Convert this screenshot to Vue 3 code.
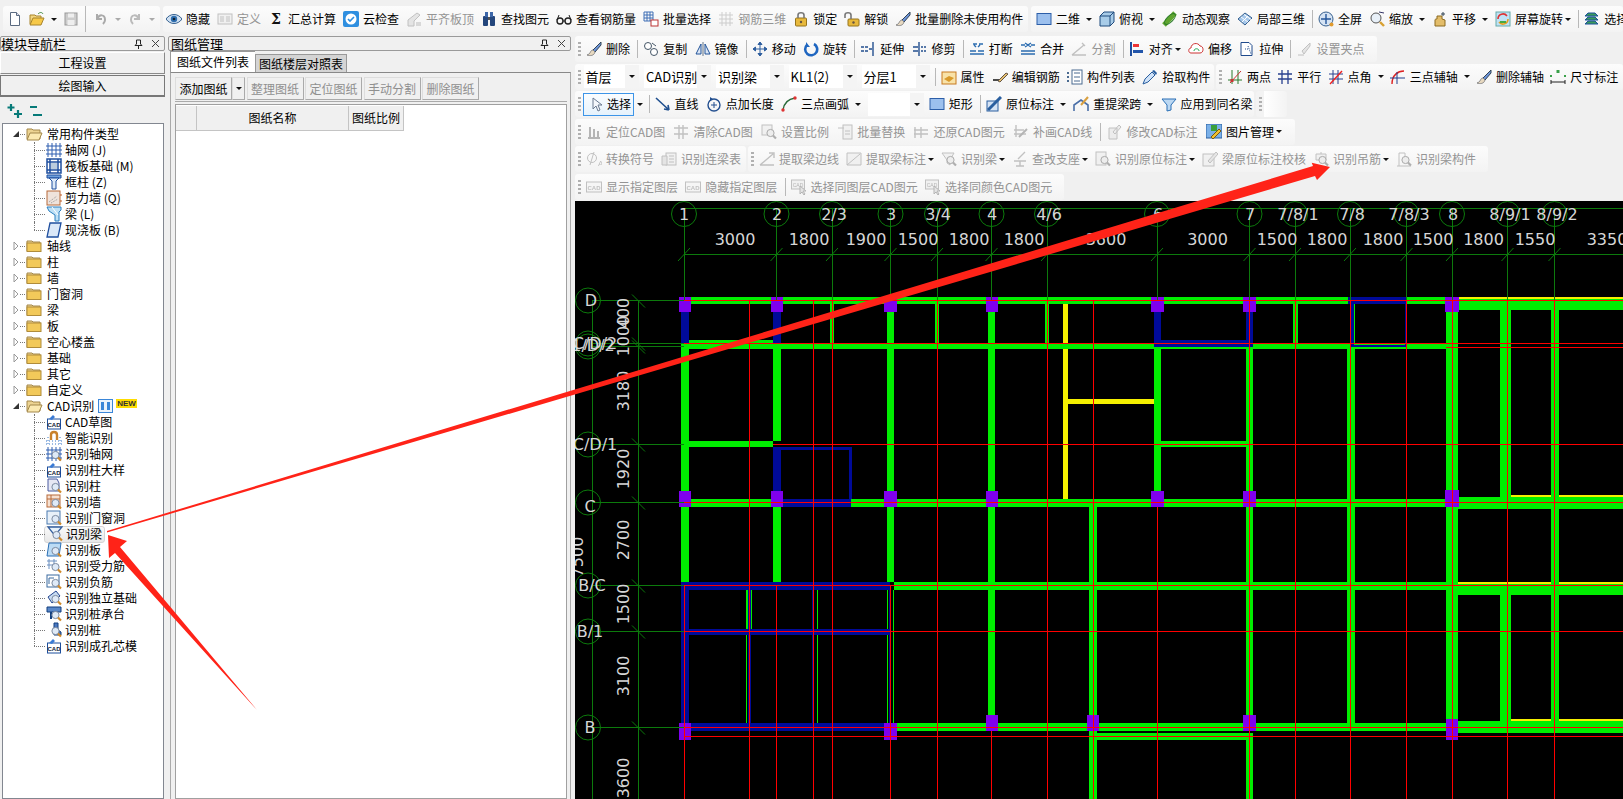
<script setup>
const mag = '<circle cx="9.5" cy="9" r="3.6" fill="#dfeaf7" stroke="#7c8aa0"/><path d="M12 11.5l3 3" stroke="#d08a2a" stroke-width="2.2"/>'
const cad = '<rect x="1.5" y="5" width="13" height="10" fill="#fff" stroke="#1d4f9c"/><text x="8" y="13" font-size="6" font-weight="700" text-anchor="middle" fill="#123" font-family="Liberation Sans">CAD</text><path d="M3 5l4-4 2 2-3 3z" fill="#3a7bd5"/>'
const gridI = '<path d="M2 1v14M6 1v14M10 1v14M14 1v14M0 4h16M0 8h16M0 12h16" stroke="#2f5fb0" fill="none"/>'
const brush = '<path d="M15 1L7 9l2 2 6-7z" fill="#6c93d8" stroke="#345"/><path d="M7 9c-3 0-2 4-6 5 3 1 7 1 8-3z" fill="#e8d9c0" stroke="#888"/>'
const icons = {
  new: '<path d="M3.5 1.5h6l3 3v10h-9z" fill="#fff" stroke="#5a6a80"/><path d="M9.5 1.5v3h3" fill="#dde" stroke="#5a6a80"/>',
  open: '<path d="M1 13V4h5l1 1h5v2" fill="#f2d680" stroke="#a8842c"/><path d="M1 14l3-7h11l-3 7z" fill="#f7c948" stroke="#a8842c"/><path d="M9 3c2-2 4-2 5 0" stroke="#3f8a3f" fill="none"/>',
  save: '<rect x="2" y="2" width="12" height="12" fill="#ccc" stroke="#999"/><rect x="5" y="2.5" width="6" height="4" fill="#eee"/><rect x="4.5" y="9" width="7" height="5" fill="#eee"/>',
  undo: '<path d="M4 3v5h5M4.5 8C6 3 12 3 12 9c0 2-1 3-2 4" fill="none" stroke="#aaa" stroke-width="2"/>',
  redo: '<path d="M12 3v5H7M11.5 8C10 3 4 3 4 9c0 2 1 3 2 4" fill="none" stroke="#bbb" stroke-width="2"/>',
  eye: '<path d="M0 8c4-6 12-6 16 0-4 6-12 6-16 0z" fill="#cfe0f2" stroke="#35608f"/><circle cx="8" cy="8" r="3.2" fill="#2f6fb0"/><circle cx="8" cy="8" r="1.3" fill="#123"/>',
  define: '<rect x="1" y="3" width="14" height="10" fill="#eee" stroke="#aaa"/><path d="M3 6h4M3 8h4M3 10h4M9 6h4M9 8h4M9 10h4" stroke="#aaa"/>',
  sigma: '<text x="8" y="13" font-size="14" font-weight="700" text-anchor="middle" fill="#111" font-family="DejaVu Serif">Σ</text>',
  check: '<rect x="0" y="0" width="16" height="16" rx="2" fill="#2f8fe0"/><circle cx="8" cy="8" r="5.5" fill="#fff"/><path d="M5 8l2 2 4-4" fill="none" stroke="#2f8fe0" stroke-width="1.6"/>',
  level: '<path d="M2 15V9l9-7 3 2-6 6v5z" fill="#ddd" stroke="#aaa"/><path d="M10 15v-4h5v4z" fill="#ccc"/>',
  binoc: '<rect x="2" y="5" width="5" height="10" rx="1" fill="#24467c"/><rect x="9" y="5" width="5" height="10" rx="1" fill="#24467c"/><rect x="4" y="1" width="3" height="5" fill="#3c66a8"/><rect x="9" y="1" width="3" height="5" fill="#3c66a8"/><rect x="7" y="6" width="2" height="3" fill="#555"/>',
  glass: '<circle cx="4" cy="10" r="3" fill="none" stroke="#222" stroke-width="1.4"/><circle cx="12" cy="10" r="3" fill="none" stroke="#222" stroke-width="1.4"/><path d="M7 10h2M1 9l2-5M15 9l-2-5" stroke="#222"/>',
  batch: '<path d="M1 1h9v9H1zM1 4h9M1 7h9M4 1v9M7 1v9" fill="none" stroke="#3f6fb5"/><rect x="8" y="9" width="7" height="6" fill="#fff" stroke="#b33"/>',
  rebar: '<path d="M1 4h14M1 8h14M1 12h14M4 1v14M8 1v14M12 1v14" stroke="#bbb" fill="none"/>',
  lock: '<rect x="2.5" y="7" width="11" height="8" rx="1" fill="#e8b93c" stroke="#96741c"/><path d="M5 7V4c0-3 6-3 6 0v3" fill="none" stroke="#777" stroke-width="1.6"/><circle cx="8" cy="11" r="1.2" fill="#654"/>',
  unlock: '<rect x="4" y="8" width="11" height="7" rx="1" fill="#e8b93c" stroke="#96741c"/><path d="M1 7V4c0-3 6-3 6 0v4" fill="none" stroke="#777" stroke-width="1.6"/><circle cx="9.5" cy="11.5" r="1.2" fill="#654"/>',
  brush,
  rect2d: '<rect x="1" y="2.5" width="14" height="11" fill="#9cc0ee" stroke="#2c5ea8"/>',
  cube: '<path d="M1 5l4-4h10v10l-4 4H1z" fill="#a8cce8" stroke="#1f4a7c"/><path d="M1 5h10v10M11 5l4-4" fill="none" stroke="#1f4a7c"/>',
  orbit: '<path d="M2 14L13 2" stroke="#5fa52f" stroke-width="5"/><ellipse cx="8" cy="8" rx="7" ry="3" fill="none" stroke="#2a7a2a" transform="rotate(-45 8 8)"/>',
  local3d: '<path d="M1 8l7-6 7 5-7 7z" fill="#a5c7ea" stroke="#35608f"/><path d="M4 6l7 5M7 3.5l7 5M5 11l6-6" stroke="#fff"/>',
  full: '<circle cx="8" cy="8" r="7" fill="#d5e3f3" stroke="#37608f"/><path d="M8 3v10M3 8h10" stroke="#23559a" stroke-width="1.4"/><circle cx="13.5" cy="13.5" r="2" fill="#e09a2d"/>',
  zoom: '<circle cx="7" cy="7" r="5" fill="#e8f0f8" stroke="#555"/><path d="M11 11l4 4" stroke="#d8a030" stroke-width="2.4"/><path d="M10 1l5 1" stroke="#336"/>',
  hand: '<path d="M3 15V9c0-1 1-1 2-1V5h5v3l3 1v6z" fill="#e3bd6a" stroke="#8c6a20"/><path d="M11 1v4M9 3h4" stroke="#345"/>',
  screen: '<rect x="1" y="1" width="14" height="14" fill="#bfe2f5" stroke="#6aa"/><path d="M3 8a5 5 0 0 1 9-3" fill="none" stroke="#d33" stroke-width="1.6"/><path d="M13 8a5 5 0 0 1-9 3" fill="none" stroke="#e3a020" stroke-width="1.6"/><rect x="5" y="10" width="6" height="2" fill="#4a4"/>',
  layer: '<path d="M1 5h13l-3-3H4zM1 9h13l-3-3H4zM1 13h13l-3-3H4z" fill="#3a9a5a" stroke="#1b4f9c"/>',
  copy: '<circle cx="5" cy="5" r="3.5" fill="#fff" stroke="#456"/><circle cx="11" cy="11" r="3.5" fill="#fff" stroke="#456"/><path d="M9 2l4 3" stroke="#456"/>',
  mirror: '<path d="M8 1v14" stroke="#678"/><path d="M6 3v10H1z" fill="#dbe6f5" stroke="#23559a"/><path d="M10 3v10h5z" fill="#dbe6f5" stroke="#23559a"/>',
  move: '<path d="M8 1v14M1 8h14M8 1L6 3.5h4zM8 15l-2-2.500h4zM1 8l2.500-2v4zM15 8l-2.500-2v4z" fill="#2f5f9f" stroke="#2f5f9f"/>',
  rotate: '<path d="M11 3a6 6 0 1 1-7 1" fill="none" stroke="#1f66c0" stroke-width="2.6"/><path d="M3 1v5h4z" fill="#1f66c0"/>',
  extend: '<path d="M13 1v14M1 6h3M5 6h3M1 10h3M5 10h3M9 8h3" stroke="#234f8f" fill="none" stroke-width="1.4"/>',
  trim: '<path d="M7 1v14M1 6h5M1 10h5M9 6h2M12 6h2M9 10h2M12 10h2" stroke="#234f8f" fill="none" stroke-width="1.4"/>',
  break: '<path d="M1 13h14M1 10h6M9 10h6M4 3h4M10 3h4M7 6l-2-2M9 6l2-2" stroke="#2b6cb0" fill="none" stroke-width="1.4"/>',
  merge: '<path d="M1 13h14M1 10h14M1 4h4M11 4h4M5 2l3 2-3 2M11 2L8 4l3 2" stroke="#2b6cb0" fill="none" stroke-width="1.4"/>',
  split: '<path d="M1 14h14M1 14l12-10M11 2l3 3" stroke="#aaa" fill="none" stroke-width="1.4"/>',
  align: '<path d="M2 1v14" stroke="#1f4f9f" stroke-width="2"/><rect x="4" y="3" width="6" height="3" fill="#e33"/><rect x="4" y="9" width="10" height="3" fill="#2255aa"/>',
  cloud: '<path d="M3 12c-3 0-3-5 0-5 0-5 7-6 9-2 4 0 4 7 0 7z" fill="#fff" stroke="#c33"/><path d="M6 10c0-3 5-3 5 0" fill="none" stroke="#2a5"/>',
  stretch: '<path d="M2 1.500h8l3 3v10H2z" fill="#fff" stroke="#1f4a8c"/><path d="M9 5l3 8M6 8h4" stroke="#1f4a8c" stroke-dasharray="1 1"/>',
  grips: '<path d="M2 14h6M14 2L6 10l2 3 6-8z" fill="#ddd" stroke="#aaa"/>',
  prop: '<rect x="1" y="3" width="14" height="12" fill="#f8e2a8" stroke="#c77a20"/><path d="M3 10l5-3 5 2-5 4z" fill="#d99a2b"/>',
  pen: '<path d="M1 11h9" stroke="#111" stroke-width="1.4"/><path d="M6 12l8-8 2 1-8 8z" fill="#e5c070" stroke="#654"/>',
  list: '<rect x="5" y="1" width="10" height="14" fill="#fff" stroke="#4a6a90"/><path d="M7 4h6M7 8h6M7 12h6" stroke="#4a6a90"/><path d="M1 3v2M1 7v2M1 11v2" stroke="#4a6a90" stroke-width="2"/>',
  drop: '<path d="M1 15l2-5 7-7 3 3-7 7z" fill="#cfe2f8" stroke="#2a5f9f"/><path d="M10 2l2-1 3 3-1 2z" fill="#2a5f9f"/>',
  twop: '<path d="M1 11h14M5 1v14M11 1v14" stroke="#2a7a2a"/><path d="M3 14L14 2" stroke="#c33"/><rect x="3.500" y="10" width="3" height="3" fill="#c33"/>',
  para: '<path d="M1 5h14M1 10h14M5 1v14M11 1v14" stroke="#28408f" stroke-width="1.300"/>',
  angle: '<path d="M1 5h14M1 10h14M5 1v14M10 1v14" stroke="#28408f"/><path d="M2 15L14 2" stroke="#e22" stroke-width="1.400"/>',
  arcax: '<path d="M2 15C2 6 8 2 14 2" fill="none" stroke="#d22" stroke-width="1.400"/><path d="M0 9h15M7 3v12" stroke="#22408f"/>',
  dim: '<path d="M1 11v4M15 11v4M1 13h14" stroke="#222"/><rect x="6.500" y="1" width="3" height="3" fill="#3aa04a"/><rect x="0" y="6" width="2" height="2" fill="#3aa04a"/><rect x="14" y="6" width="2" height="2" fill="#3aa04a"/>',
  cursor: '<path d="M4 2v11l3-3 2 5 2-1-2-5h4z" fill="#f4f7fb" stroke="#6a7a90"/>',
  line: '<path d="M1 2l13 12M14 14l-1-5M14 14l-5-1" fill="none" stroke="#1f4f8f" stroke-width="1.600"/>',
  plen: '<circle cx="8" cy="9" r="6" fill="none" stroke="#234f8f" stroke-width="1.400"/><path d="M8 6v6M5 9h6" stroke="#234f8f"/><path d="M4 1l3 2-3 2z" fill="#234f8f"/>',
  arc: '<path d="M2 14C3 7 7 3 14 2" fill="none" stroke="#2a6a3a" stroke-width="1.400"/><circle cx="2" cy="14" r="1.700" fill="#d33"/><circle cx="14" cy="2" r="1.700" fill="#d33"/>',
  mark: '<rect x="1" y="5" width="11" height="10" fill="#d5e3f5" stroke="#2a5f9f"/><path d="M2 14L15 1" stroke="#2a5f9f" stroke-width="3"/>',
  respan: '<path d="M1 15V9l7-5 7 5v6" fill="none" stroke="#4a6fa8" stroke-width="1.600"/><path d="M8 9l7-8" stroke="#d9a040" stroke-width="2"/>',
  applyI: '<path d="M1 3h14l-5 6v5l-4 1V9z" fill="#bcd8f2" stroke="#2a6fb5"/>',
  locate: '<path d="M2 14h12M4 13V3M8 13V5M12 13V7" stroke="#999" stroke-width="2"/>',
  clear: '<path d="M1 4h14M1 10h14M6 1v14M10 1v14" stroke="#aaa" stroke-width="1.400"/>',
  scale: '<rect x="1" y="1" width="10" height="10" fill="#eee" stroke="#aaa"/>' + mag,
  swap: '<rect x="6" y="1" width="9" height="14" fill="#eee" stroke="#aaa"/><path d="M1 4h6M8 7h5M8 10h5" stroke="#aaa"/>',
  revert: '<path d="M2 3v11M8 3v11M1 6h14M1 10h14" stroke="#aaa" stroke-width="1.400"/>',
  fill: '<path d="M3 1v12M1 6h10M1 10h12" stroke="#aaa" stroke-width="1.400"/><path d="M6 13l8-8" stroke="#999" stroke-width="2"/>',
  edit: '<path d="M3 4h8v11H3zM7 8l6-7 2 2-6 7z" fill="#e8e8e8" stroke="#aaa"/>',
  pic: '<rect x="0" y="0" width="16" height="14" fill="#7ab0e8" stroke="#2a5f9f"/><rect x="5" y="1" width="6" height="6" fill="#3aa03a"/><path d="M7 15l8-8-2-2-8 8z" fill="#f0c030" stroke="#7a5a10"/>',
  sym: '<circle cx="6" cy="7" r="4.500" fill="none" stroke="#aaa"/><path d="M4 14L8 1" stroke="#aaa"/><text x="12" y="15" font-size="8" fill="#aaa" font-family="Liberation Sans">A</text>',
  table: '<rect x="5" y="2" width="10" height="12" fill="#eee" stroke="#aaa"/><path d="M1 5h5v9H1z" fill="#ddd" stroke="#aaa"/><path d="M8 5h5M8 8h5M8 11h5" stroke="#aaa"/>',
  edge: '<path d="M1 14h14M1 14L14 3M10 2h5v5" fill="none" stroke="#aaa" stroke-width="1.400"/>',
  tag: '<path d="M1 2h14v12H1zM1 14L14 3" fill="#eee" stroke="#aaa"/>',
  beamf: '<path d="M1 2h12l-4 7v5l-3-2V9z" fill="#eee" stroke="#aaa"/>' + mag,
  seat: '<path d="M2 10h12M8 10v5M4 15h8M6 8l7-7" stroke="#aaa" stroke-width="1.400"/>',
  orig: '<rect x="1" y="1" width="10" height="13" fill="#eee" stroke="#aaa"/>' + mag,
  verify: '<rect x="1" y="3" width="11" height="12" fill="#eee" stroke="#aaa"/><path d="M6 10l8-9 2 2-8 9z" fill="#ddd" stroke="#aaa"/>',
  hang: '<path d="M3 3h10v6H3z" fill="#eee" stroke="#aaa"/><path d="M8 1v2" stroke="#aaa"/>' + mag,
  bcomp: '<path d="M1 15h14M3 15V2h6v6" fill="none" stroke="#aaa"/>' + mag,
  cadbox: '<rect x="0.500" y="3" width="15" height="10" fill="#f4f4f4" stroke="#aaa"/><text x="8" y="10.500" font-size="6" font-weight="700" text-anchor="middle" fill="#aaa" font-family="Liberation Sans">CAD</text>',
  cadsel: '<rect x="0.500" y="1" width="13" height="9" fill="#eee" stroke="#aaa"/><text x="7" y="8" font-size="5" text-anchor="middle" fill="#999" font-family="Liberation Sans">CAD</text><path d="M9 7v8l2-2 2 3 1-1-2-3h3z" fill="#ddd" stroke="#999"/>',
  // tree icons
  grid: gridI,
  raft: '<rect x="1" y="1" width="14" height="14" fill="#fff" stroke="#1f4f9f" stroke-width="1.500"/><path d="M4 1v14M12 1v14M1 4h14M1 12h14" stroke="#1f4f9f" stroke-width="1.500"/><rect x="5" y="5" width="6" height="6" fill="#bcd"/>',
  col: '<path d="M1 1h14v3H1z" fill="#6fa0dc" stroke="#1f4f9f"/><path d="M3 4h10l-3 3v8H6V7z" fill="#dbe8f7" stroke="#1f4f9f"/>',
  wall: '<rect x="1" y="1" width="13" height="14" fill="#efe3dc" stroke="#b86a3a"/><path d="M3 12l8-6M5 13l7-4" stroke="#999" stroke-dasharray="1 1"/><path d="M14 5h2M14 11h2" stroke="#c05a20"/>',
  beam: '<path d="M1 1h14v3l-2 2v9h-4V9L3 5z" fill="#bfe0f5" stroke="#2a7fc0"/><path d="M6 1l6 8" stroke="#fff"/>',
  slab: '<path d="M4 1h11l-3 14H1z" fill="#dbe8f8" stroke="#1f4f9f" stroke-width="1.300"/>',
  cad,
  magnet: '<path d="M5 10V5c0-4 6-4 6 0v5" fill="none" stroke="#c9812a" stroke-width="2.400"/><path d="M0 11h16M0 14h16M2 7v9M14 7v9" stroke="#3a78c8" stroke-dasharray="1 2"/>',
  fgrid: gridI + mag,
  fwall: '<rect x="1" y="1" width="13" height="12" fill="#f6e0d0" stroke="#b86a3a"/><path d="M1 5h13M5 1v12" stroke="#b86a3a"/>' + mag,
  fcol: '<path d="M2 1h9l2 4v8H2z" fill="#e6e8f4" stroke="#4a5aa0"/>' + mag,
  fdoor: '<rect x="1" y="1" width="13" height="13" fill="#e8f0f8" stroke="#4a7ab0"/>' + mag,
  fbeam: '<path d="M1 1h14L9 8v3z" fill="#e8f2fa" stroke="#345f9f" stroke-width="1.300"/>' + mag,
  fslab: '<path d="M3 1h12l-2 13H1z" fill="#bcdcf5" stroke="#2a6fb5"/>' + mag,
  frebar: '<path d="M1 3h10M1 7h10M3 1v10M8 1v10" stroke="#6a8fc0"/>' + mag,
  fneg: '<rect x="1" y="1" width="12" height="12" fill="#fff" stroke="#3a6a9f"/><path d="M3 10V4h5" fill="none" stroke="#3a6a9f"/>' + mag,
  ffound: '<path d="M2 7l8-6 4 5-8 7z" fill="#c8dcf2" stroke="#23458f"/>' + mag,
  fcap: '<path d="M1 1h14v5H1z" fill="#5a88c8" stroke="#123f7f"/><path d="M5 6v7" stroke="#123f7f" stroke-width="2"/>' + mag,
  fpile: '<path d="M8 1h4v7l3 2v3H8z" fill="#4a78c0" stroke="#123f7f"/>' + mag
}

const it = (i, t, a = 0, off = false) => ({ i, t, a, off })
const dis = (i, t, a = 0) => it(i, t, a, true)
const sep = { sep: true }

const topLeft = [
  { i: 'new', only: true },
  { i: 'open', only: true, a: 1 },
  { i: 'save', only: true },
  sep,
  { i: 'undo', only: true, a: 1 },
  { i: 'redo', only: true, a: 1 }
]
const topMid = [
  it('eye', '隐藏'), dis('define', '定义'), it('sigma', '汇总计算'), it('check', '云检查'),
  dis('level', '平齐板顶'), it('binoc', '查找图元'), it('glass', '查看钢筋量'), it('batch', '批量选择'),
  dis('rebar', '钢筋三维'), it('lock', '锁定'), it('unlock', '解锁'), it('brush', '批量删除未使用构件')
]
const topRight = [
  it('rect2d', '二维', 1), it('cube', '俯视', 1), it('orbit', '动态观察'), it('local3d', '局部三维'), sep,
  it('full', '全屏'), it('zoom', '缩放', 1), it('hand', '平移', 1), it('screen', '屏幕旋转', 2), sep,
  it('layer', '选择')
]

const rows = [
  [{ grip: true, items: [
    it('brush', '删除'), sep, it('copy', '复制'), it('mirror', '镜像'), sep, it('move', '移动'), it('rotate', '旋转'), sep,
    it('extend', '延伸'), it('trim', '修剪'), sep, it('break', '打断'), it('merge', '合并'), dis('split', '分割'), sep,
    it('align', '对齐', 2), it('cloud', '偏移'), it('stretch', '拉伸'), sep, dis('grips', '设置夹点')
  ] }],
  [{ grip: true, width: 639, items: [
    { combo: '首层', w: 55.5 }, { combo: 'CAD识别', w: 67 }, { combo: '识别梁', w: 67.5 }, { combo: 'KL1(2)', w: 68 }, { combo: '分层1', w: 68 },
    sep, it('prop', '属性'), it('pen', '编辑钢筋'), it('list', '构件列表'), it('drop', '拾取构件')
  ] }, { grip: true, fill: true, items: [
    it('twop', '两点'), it('para', '平行'), it('angle', '点角', 1), it('arcax', '三点辅轴', 1), it('brush', '删除辅轴'), it('dim', '尺寸标注')
  ] }],
  [{ grip: true, width: 679, items: [
    { sel: true }, sep, it('line', '直线'), it('plen', '点加长度'), it('arc', '三点画弧', 1), { combo: '', w: 55.5 },
    it('rect2d', '矩形'), sep, it('mark', '原位标注', 1), it('respan', '重提梁跨', 1), it('applyI', '应用到同名梁')
  ] }, { grip: true, width: 31, blank: true, items: [] }],
  [{ grip: true, items: [
    dis('locate', '定位CAD图'), dis('clear', '清除CAD图'), dis('scale', '设置比例'), dis('swap', '批量替换'),
    dis('revert', '还原CAD图元'), dis('fill', '补画CAD线'), sep, dis('edit', '修改CAD标注'), it('pic', '图片管理', 2)
  ] }],
  [{ grip: true, width: 171, items: [dis('sym', '转换符号'), dis('table', '识别连梁表')] },
   { grip: true, items: [
    dis('edge', '提取梁边线'), dis('tag', '提取梁标注', 2), dis('beamf', '识别梁', 2), dis('seat', '查改支座', 2),
    dis('orig', '识别原位标注', 2), dis('verify', '梁原位标注校核'), dis('hang', '识别吊筋', 2), dis('bcomp', '识别梁构件')
  ] }],
  [{ grip: true, items: [
    dis('cadbox', '显示指定图层'), dis('cadbox', '隐藏指定图层'), sep, dis('cadsel', '选择同图层CAD图元'), dis('cadsel', '选择同颜色CAD图元')
  ] }]
]

const tree = [
  { t: '常用构件类型', open: true },
  ...[['grid', '轴网 (J)'], ['raft', '筏板基础 (M)'], ['col', '框柱 (Z)'], ['wall', '剪力墙 (Q)'], ['beam', '梁 (L)'], ['slab', '现浇板 (B)']]
    .map(([i, t], n) => ({ i, t, child: true, last: n === 5 })),
  ...['轴线', '柱', '墙', '门窗洞', '梁', '板', '空心楼盖', '基础', '其它', '自定义'].map((t) => ({ t })),
  { t: 'CAD识别', open: true, badge: true },
  ...[['cad', 'CAD草图'], ['magnet', '智能识别'], ['fgrid', '识别轴网'], ['cad', '识别柱大样'], ['fcol', '识别柱'], ['fwall', '识别墙'],
    ['fdoor', '识别门窗洞'], ['fbeam', '识别梁'], ['fslab', '识别板'], ['frebar', '识别受力筋'], ['fneg', '识别负筋'], ['ffound', '识别独立基础'],
    ['fcap', '识别桩承台'], ['fpile', '识别桩'], ['cad', '识别成孔芯模']]
    .map(([i, t], n) => ({ i, t, child: true, last: n === 14, active: n === 7 }))
]

// drawing: everything below is in page pixels, the svg viewBox matches
const colX = [684, 776.5, 832, 890.5, 937, 991.5, 1047, 1157, 1249.5, 1295, 1350, 1406.5, 1452, 1507.5, 1554.5]
const topLabels = [
  ['1', 684, 684], ['2', 776.5, 777], ['2/3', 832, 834], ['3', 890.5, 891], ['3/4', 937, 938], ['4', 991.5, 992], ['4/6', 1047, 1049],
  ['6', 1157, 1158], ['7', 1249.5, 1250], ['7/8/1', 1295, 1298], ['7/8', 1350, 1352], ['7/8/3', 1406.5, 1409], ['8', 1452, 1453],
  ['8/9/1', 1507.5, 1510], ['8/9/2', 1554.5, 1557]
]
const dims = [
  ['3000', 735], ['1800', 809], ['1900', 866], ['1500', 918], ['1800', 969], ['1800', 1024], ['3600', 1106], ['3000', 1207.5],
  ['1500', 1277], ['1800', 1327], ['1800', 1383], ['1500', 1433], ['1800', 1483.5], ['1550', 1535], ['3350', 1607]
]
const rowY = [300.5, 343.5, 346.5, 444.5, 502.5, 585.5, 631.5, 727.5]
const rowLabels = [['D', 591, 306], ['C/D/2', 595, 349], ['1/D/2', 593, 351], ['C/D/1', 595, 450], ['C', 590, 512], ['B/C', 592, 591], ['B/1', 590, 637], ['B', 590, 733]]
const sideDims = [['400', 313], ['1000', 336], ['3180', 391], ['1920', 469], ['2700', 540], ['1500', 604], ['3100', 676], ['3600', 778]]

const green = [
  [681, 297, 1446, 304], [681, 304, 689, 585], [773, 343, 781, 441], [773, 507, 781, 582], [689, 340, 773, 344], [681, 343, 1446, 349],
  [830, 304, 834, 343], [887, 304, 894, 582], [934.5, 304, 939, 343], [988, 297, 995, 731], [1045, 304, 1049, 343],
  [689, 441, 773, 447], [1161, 441, 1246, 447], [681, 499, 1446, 507], [1154, 297, 1161, 499], [1246, 297, 1253, 731],
  [1293, 304, 1298, 343], [1347, 343, 1355, 731], [1446, 297, 1458, 731], [1458, 299, 1623, 310], [1500, 310, 1511, 497],
  [1551, 310, 1559, 733], [1458, 497, 1623, 509], [894, 582, 1446, 590], [1458, 584, 1623, 595], [1500, 595, 1511, 721],
  [1458, 721, 1623, 733], [897, 723, 1446, 731], [1089, 507, 1097, 799], [1097, 733, 1253, 740], [1246, 740, 1253, 799],
  [746, 590, 752, 629], [746, 635, 747, 723], [817, 590, 818, 629], [817, 635, 818, 723], [887, 590, 888, 723], [893, 590, 894, 723], [1354, 304, 1355, 347]
]
const yellow = [
  [1063, 304, 1068, 343], [1063, 349, 1068, 499], [1068, 399, 1154, 404], [1458, 297, 1623, 299], [1511, 495, 1551, 497], [1559, 495, 1623, 497],
  [1458, 582, 1551, 584], [1559, 582, 1623, 584], [1511, 719, 1551, 721], [1559, 719, 1623, 721]
]
const blue = [
  [681, 312, 689, 343], [773, 312, 781, 343], [773, 447, 781, 507], [773, 447, 851, 450], [849, 447, 852, 499], [781, 499, 851, 507],
  [1154, 312, 1161, 343], [1246, 312, 1253, 343], [1154, 340, 1253, 347], [1348, 297, 1407, 304], [1350, 304, 1354, 347], [1405, 304, 1407, 347], [1350, 345, 1407, 347],
  [681, 582, 890, 590], [681, 590, 689, 731], [681, 629, 890, 635], [681, 723, 890, 731], [748, 590, 751, 723], [811.5, 590, 814, 723], [889, 590, 891, 723]
]
const purple = [
  [679, 297, 691, 312], [771, 297, 783, 312], [884, 297, 897, 312], [986, 297, 998, 312], [1151, 297, 1164, 312], [1243, 297, 1256, 312], [1445, 297, 1459, 312],
  [679, 491, 691, 507], [771, 491, 783, 507], [884, 491, 897, 507], [986, 491, 998, 507], [1151, 491, 1164, 507], [1243, 491, 1256, 507], [1445, 490, 1459, 507],
  [679, 723, 691, 740], [884, 723, 897, 740], [986, 715, 998, 731], [1087, 715, 1099, 731], [1243, 715, 1256, 731], [1446, 719, 1458, 740]
]
const redFull = [749.5, 813.5, 832, 937, 1047, 1093, 1249.5, 1295, 1350, 1406.5, 1452, 1507.5, 1554.5]
const redPart = [[684, 585], [776.5, 585], [890.5, 585], [991.5, 731], [1157, 507]]
const redH = [[300.5, 684], [343.5, 684], [347.5, 1446], [444.5, 773], [502.5, 684], [585.5, 684], [631.5, 684], [727.5, 684], [736.5, 684]]
</script>

<template>
  <div class="app">
    <div class="topbar">
      <div class="seg seg-first">
        <template v-for="(b, n) in topLeft" :key="n">
          <span v-if="b.sep" class="sep tall"></span>
          <span v-else class="tool solo">
            <svg class="ico" viewBox="0 0 16 16" v-html="icons[b.i]"></svg>
            <span v-if="b.a" class="caret" :class="{ faint: b.i !== 'open' }"></span>
          </span>
        </template>
      </div>
      <div class="seg seg-mid">
        <span v-for="b in topMid" :key="b.t" class="tool" :class="{ off: b.off }">
          <svg class="ico" viewBox="0 0 16 16" v-html="icons[b.i]"></svg>{{ b.t }}
        </span>
      </div>
      <div class="seg seg-right">
        <template v-for="(b, n) in topRight" :key="n">
          <span v-if="b.sep" class="sep"></span>
          <span v-else class="tool">
            <svg class="ico" viewBox="0 0 16 16" v-html="icons[b.i]"></svg>{{ b.t }}
            <span v-if="b.a" class="caret" :class="b.a === 2 ? 'tight' : ''"></span>
          </span>
        </template>
      </div>
    </div>

    <div class="main">
      <aside class="nav">
        <div class="title">
          <span class="title-text">模块导航栏</span>
          <svg class="pin" width="9" height="10" viewBox="0 0 9 10"><path d="M2.500 1h4v4l1.500 1.500H1L2.500 5zM4.500 6.500V10" fill="none" stroke="#222" /></svg>
          <svg class="close" width="9" height="9" viewBox="0 0 9 9"><path d="M1 1l7 7M8 1L1 8" stroke="#444" /></svg>
        </div>
        <button class="big">工程设置</button>
        <button class="big pressed">绘图输入</button>
        <div class="expand">
          <svg width="40" height="18" viewBox="0 0 40 18">
            <path d="M5 1v7M1.500 4.500h7M12 7v8M8 11h8" stroke="#067a78" stroke-width="2.200" fill="none" />
            <path d="M24 4h7M27 12h9" stroke="#067a78" stroke-width="2.200" fill="none" />
          </svg>
        </div>
        <div class="tree">
          <div v-for="n in tree" :key="n.t" class="node" :class="{ child: n.child, last: n.last }">
            <template v-if="n.child">
              <span class="leaf" :class="{ active: n.active }">
                <svg class="ico" viewBox="0 0 16 16" v-html="icons[n.i]"></svg>
                <span class="leaf-text">{{ n.t }}</span>
              </span>
            </template>
            <template v-else>
              <svg class="exp" width="7" height="10" viewBox="0 0 7 10">
                <path v-if="n.open" d="M0 8l6-6v6z" fill="#333" />
                <path v-else d="M1 1l4 4-4 4z" fill="#fff" stroke="#999" />
              </svg>
              <span class="dash"></span>
              <svg class="folder" width="17" height="14" viewBox="0 0 17 14">
                <path d="M1 12V2h5l1 1h7v9z" fill="#ecd391" stroke="#a3874a" />
                <path v-if="n.open" d="M1 13l3-7h12l-3 7z" fill="#fbe9b0" stroke="#a3874a" />
                <rect v-else x="1" y="4" width="14" height="8.500" fill="#f2c95a" stroke="#b08c3a" />
              </svg>
              <span class="group-text">{{ n.t }}</span>
              <template v-if="n.badge">
                <svg class="badge-ico" width="15" height="14" viewBox="0 0 15 14">
                  <rect x=".5" y=".5" width="14" height="13" fill="#eaf3fc" stroke="#3a86d8" />
                  <path d="M3 3h3v8H3zM9 3h3v8H9z" fill="#3a86d8" />
                </svg>
                <span class="new">NEW</span>
              </template>
            </template>
          </div>
        </div>
      </aside>

      <section class="docs">
        <div class="title">
          <span class="title-text">图纸管理</span>
          <svg class="pin" width="9" height="10" viewBox="0 0 9 10"><path d="M2.500 1h4v4l1.500 1.500H1L2.500 5zM4.500 6.500V10" fill="none" stroke="#222" /></svg>
          <svg class="close" width="9" height="9" viewBox="0 0 9 9"><path d="M1 1l7 7M8 1L1 8" stroke="#444" /></svg>
        </div>
        <div class="tabs">
          <span class="tab on">图纸文件列表</span>
          <span class="tab">图纸楼层对照表</span>
        </div>
        <div class="tabpane">
          <div class="btns">
            <span class="btn wide">添加图纸</span>
            <span class="btn drop"><i class="caret solo-caret"></i></span>
            <span class="btn off">整理图纸</span>
            <span class="btn off">定位图纸</span>
            <span class="btn off">手动分割</span>
            <span class="btn off">删除图纸</span>
          </div>
          <div class="grid">
            <div class="head">
              <span class="h0"></span>
              <span class="h1">图纸名称</span>
              <span class="h2">图纸比例</span>
            </div>
          </div>
        </div>
      </section>

      <section class="work">
        <div v-for="(row, r) in rows" :key="r" class="row" :class="'row' + r">
          <div
            v-for="(s, k) in row" :key="k" class="seg"
            :class="{ fill: s.fill, blank: s.blank }"
            :style="s.width ? { width: s.width + 'px' } : null"
          >
            <span class="grip"></span>
            <template v-for="(b, n) in s.items" :key="n">
              <span v-if="b.sep" class="sep"></span>
              <span v-else-if="b.combo !== undefined" class="combo" :style="{ width: b.w + 'px' }">
                <span class="combo-text">{{ b.combo }}</span><span class="combo-btn"><i class="caret solo-caret"></i></span>
              </span>
              <template v-else-if="b.sel">
                <span class="select-btn"><svg class="ico" viewBox="0 0 16 16" v-html="icons.cursor"></svg>选择</span>
                <span class="caret after-sel"></span>
              </template>
              <span v-else class="tool" :class="{ off: b.off }">
                <svg class="ico" viewBox="0 0 16 16" v-html="icons[b.i]"></svg>{{ b.t }}
                <span v-if="b.a" class="caret" :class="b.a === 2 ? 'tight' : ''"></span>
              </span>
            </template>
          </div>
        </div>

        <svg class="cad" viewBox="575 201 1048 598" shape-rendering="crispEdges">
          <rect v-for="(b, n) in green" :key="'g' + n" :x="b[0]" :y="b[1]" :width="b[2] - b[0]" :height="b[3] - b[1]" fill="#00ee00" />
          <rect v-for="(b, n) in yellow" :key="'y' + n" :x="b[0]" :y="b[1]" :width="b[2] - b[0]" :height="b[3] - b[1]" fill="#f5f000" />
          <rect v-for="(b, n) in blue" :key="'b' + n" :x="b[0]" :y="b[1]" :width="b[2] - b[0]" :height="b[3] - b[1]" fill="#000a99" />
          <rect v-for="(b, n) in purple" :key="'p' + n" :x="b[0]" :y="b[1]" :width="b[2] - b[0]" :height="b[3] - b[1]" fill="#7f00ee" />

          <g stroke="#0c7a0c" fill="none">
            <path d="M684 208.500H1623M684 254.500H1623M592.500 300V799M638.500 300V799" />
            <path v-for="x in colX" :key="'ax' + x" :d="`M${x} 208V300`" />
            <path v-for="y in rowY" :key="'ay' + y" :d="`M592 ${y}H684`" />
          </g>
          <g stroke="#0c7a0c" fill="none" shape-rendering="auto">
            <path v-for="x in colX" :key="'tk' + x" :d="`M${x - 6} 261L${x + 6} 248`" />
            <path v-for="y in rowY" :key="'tl' + y" :d="`M632 ${y - 6}L645 ${y + 7}`" />
            <circle v-for="l in topLabels" :key="'tc' + l[0]" :cx="l[1]" cy="214" r="12.500" />
            <circle v-for="y in rowY" :key="'lc' + y" cx="588" :cy="y" r="12.500" />
          </g>

          <g stroke="#ff0000" fill="none">
            <path v-for="x in redFull" :key="'rf' + x" :d="`M${x} 300V799`" />
            <path v-for="b in redPart" :key="'rp' + b[0]" :d="`M${b[0]} ${b[1]}V799`" />
            <path v-for="b in redH" :key="'rh' + b[0] + b[1]" :d="`M${b[1]} ${b[0]}H1623`" />
          </g>

          <g class="cad-text" shape-rendering="auto">
            <text v-for="l in topLabels" :key="'tt' + l[0]" :x="l[2]" y="220" text-anchor="middle">{{ l[0] }}</text>
            <text v-for="(d, n) in dims" :key="'dm' + n" :x="d[1]" y="245" text-anchor="middle">{{ d[0] }}</text>
            <text v-for="l in rowLabels" :key="'rl' + l[0]" :x="l[1]" :y="l[2]" text-anchor="middle">{{ l[0] }}</text>
            <text v-for="(d, n) in sideDims" :key="'sd' + n" text-anchor="middle" :transform="`translate(629 ${d[1]}) rotate(-90)`">{{ d[0] }}</text>
            <text text-anchor="middle" transform="translate(583 557) rotate(-90)">7500</text>
          </g>
        </svg>
      </section>
    </div>

    <svg class="arrows" width="1623" height="799" viewBox="0 0 1623 799">
      <path d="M107 531L1313 166 1311.700 162.700 1330 167 1317 180 1315 176 107 532.500Z" fill="#ff2318" />
      <path d="M108 535L127 541 120 547 257 710 115 553 109 558Z" fill="#ff2318" />
    </svg>
  </div>
</template>

<style scoped>
.app {
  position: relative;
  width: 1623px;
  height: 799px;
  overflow: hidden;
  background: #f0f0f0;
  font: 12px/16px "Noto Sans CJK SC", "Liberation Sans", sans-serif;
  color: #000;
}

.topbar {
  display: flex;
  height: 36px;
  padding: 6px 0 4px 3px;
  box-sizing: border-box;
  gap: 3px;
}

.seg {
  display: flex;
  align-items: center;
  height: 26px;
  box-sizing: border-box;
  flex: none;
  border-radius: 3px;
  background: linear-gradient(#fcfcfc, #f3f3f3);
  white-space: nowrap;
  overflow: hidden;
}

.seg-first { width: 157px; padding-left: 4px; }
.seg-mid { width: 865px; padding-left: 3px; }
.seg-mid .tool { margin-right: 7px; }
.seg-right { flex: 1; padding-left: 5px; }
.seg-right .tool { margin-right: 7px; }

.tool {
  display: inline-flex;
  align-items: center;
  flex: none;
  margin-right: 7.25px;
}
.tool.solo { margin-right: 6px; }
.tool.off { color: #949494; }
.tool.off .ico { filter: grayscale(1); opacity: .7; }

.row3 .tool { margin-right: 8.25px; }
.row4 .tool { margin-right: 7px; }
.fill .tool { margin-right: 6.25px; }

.ico {
  flex: none;
  width: 16px;
  height: 16px;
  margin-right: 4px;
}
.solo .ico { margin-right: 0; }

.caret {
  display: inline-block;
  flex: none;
  width: 0;
  height: 0;
  margin-left: 6px;
  border-style: solid;
  border-width: 3px 3px 0;
  border-color: #111 transparent transparent;
}
.caret.tight { margin-left: 2px; }
.caret.faint { border-top-color: #aaa; }
.solo .caret { margin-left: 6px; }
.solo-caret { margin: 0; }
.after-sel { margin: 0 5.500px 0 3px; }

.sep {
  flex: none;
  width: 1px;
  height: 18px;
  margin-right: 5px;
  background: #b8b8b8;
}
.sep.tall { height: 26px; margin-right: 7px; }

.main {
  display: flex;
  height: 763px;
}

.title {
  display: flex;
  align-items: center;
  height: 15px;
  box-sizing: border-box;
  border: 1px solid #9a9a9a;
  border-radius: 2px;
  font-size: 13px;
}
.title-text { flex: 1; }
.pin { flex: none; margin-right: 8px; }
.close { flex: none; margin-right: 4px; }

.nav {
  flex: none;
  width: 165px;
  margin-right: 3px;
  display: flex;
  flex-direction: column;
}

.big {
  display: block;
  height: 22px;
  margin-top: 1px;
  padding: 0;
  background: #f0f0f0;
  border: 1px solid;
  border-color: #fff #8a8a8a #8a8a8a #fff;
  font: inherit;
}
.big.pressed {
  border: 1px solid #777;
  border-bottom-width: 2px;
}

.expand {
  height: 26px;
  padding: 6px 0 0 6px;
  box-sizing: border-box;
}

.tree {
  flex: 1;
  margin: 0 1px 0 2px;
  padding-top: 2px;
  background: #fff;
  border: 1px solid #828790;
}

.node {
  position: relative;
  display: flex;
  align-items: center;
  height: 16px;
  padding-left: 10px;
}
.exp { flex: none; }
.dash {
  flex: none;
  width: 5px;
  margin-right: 1px;
  border-top: 1px dotted #777;
}
.folder { flex: none; margin-right: 4px; }
.group-text { flex: none; }
.badge-ico { margin-left: 4px; }
.new {
  margin-left: 3px;
  margin-top: -6px;
  height: 9px;
  padding: 0 1px;
  background: #ffdd00;
  font: 700 8px/9px "Liberation Sans", sans-serif;
  color: #333;
}

.child { padding-left: 43px; }
.child::before {
  content: "";
  position: absolute;
  left: 31px;
  top: 0;
  bottom: 0;
  border-left: 1px dotted #777;
}
.child.last::before { bottom: 8px; }
.child::after {
  content: "";
  position: absolute;
  left: 31px;
  width: 11px;
  top: 8px;
  border-top: 1px dotted #777;
}
.leaf {
  display: inline-flex;
  align-items: center;
  height: 15px;
}
.leaf .ico { margin-right: 1px; }
.leaf-text { padding: 0 2px 0 2px; }
.leaf.active {
  margin-left: -2px;
  padding: 0 0 0 2px;
  border: 1px solid #d4d4d4;
  border-radius: 3px;
  background: linear-gradient(#fafafa, #e8e8e8);
}

.docs {
  flex: none;
  width: 403px;
  margin-right: 4px;
}
.docs .title { padding-left: 2px; }

.tabs {
  display: flex;
  align-items: flex-end;
  height: 21px;
  padding-left: 2px;
}
.tab {
  height: 17px;
  padding: 0 3px;
  background: #d4d4d4;
  border: 1px solid #999;
  border-bottom: 0;
  line-height: 17px;
}
.tab.on {
  height: 20px;
  padding: 0 6px;
  background: #fff;
  line-height: 19px;
  border-right: 0;
}

.tabpane {
  height: 727px;
  margin-left: 2px;
  padding: 4px 3px 0 4px;
  box-sizing: border-box;
  border-top: 1px solid #888;
  border-left: 1px solid #aaa;
  border-right: 1px solid #aaa;
  background: #f0f0f0;
  display: flex;
  flex-direction: column;
}

.btns {
  display: flex;
  height: 24px;
  border-bottom: 1px solid #aaa;
}
.btn {
  box-sizing: border-box;
  width: 57px;
  height: 23px;
  margin-right: 1.500px;
  border: 1px solid #aaa;
  border-top-color: #ddd;
  border-left-color: #ddd;
  text-align: center;
  line-height: 21px;
}
.btn.wide { margin-right: 0; }
.btn.drop {
  width: 13px;
  display: flex;
  align-items: center;
  justify-content: center;
}
.btn.off { color: #8f8f8f; }

.grid {
  flex: 1;
  margin-top: 2px;
  background: #fff;
  border: 1px solid #a0a0a0;
}
.head {
  display: flex;
  height: 25px;
  margin-top: 1px;
}
.head span {
  box-sizing: border-box;
  height: 25px;
  background: #f0f0f0;
  border-right: 1px solid #c4c4c4;
  border-bottom: 1px solid #c4c4c4;
  text-align: center;
  line-height: 24px;
}
.h0 { width: 21px; }
.h1 { width: 152px; }
.h2 { width: 55px; }

.work {
  flex: 1;
  min-width: 0;
  display: flex;
  flex-direction: column;
}

.row {
  display: flex;
  flex: none;
  height: 27.500px;
  gap: 2px;
  overflow: hidden;
}
.row .seg { padding-right: 5px; }
.seg.fill { flex: 1; padding-right: 0; }
.seg.blank { background: linear-gradient(90deg, #f3f3f3 8px, #fff 8px, #f3f3f3); }

.grip {
  flex: none;
  width: 3px;
  height: 14px;
  margin: 0 5px 0 3px;
  background: repeating-linear-gradient(#b0b0b0 0 2px, transparent 2px 4px);
}

.combo {
  display: flex;
  flex: none;
  box-sizing: border-box;
  height: 23px;
  margin-right: 5px;
  background: #fff;
  font-size: 13px;
  line-height: 23px;
}
.grip + .combo { margin-left: -2.500px; }
.combo-text { flex: 1; padding-left: 2px; overflow: hidden; }
.combo-btn {
  flex: none;
  width: 14px;
  display: flex;
  align-items: center;
  justify-content: center;
  background: #f4f4f4;
}

.select-btn {
  display: inline-flex;
  align-items: center;
  flex: none;
  box-sizing: border-box;
  width: 51px;
  height: 23px;
  margin-left: -3px;
  padding-left: 5px;
  background: linear-gradient(#fafdff, #e6f2fc);
  border: 1px solid #3d95e8;
}
.select-btn .ico { margin-right: 2px; }

.cad {
  display: block;
  flex: none;
  width: 1048px;
  height: 598px;
  background: #000;
}
.cad-text text {
  font: 16px "DejaVu Sans", sans-serif;
  fill: #d6d6d6;
}

.arrows {
  position: absolute;
  left: 0;
  top: 0;
  pointer-events: none;
}
</style>
